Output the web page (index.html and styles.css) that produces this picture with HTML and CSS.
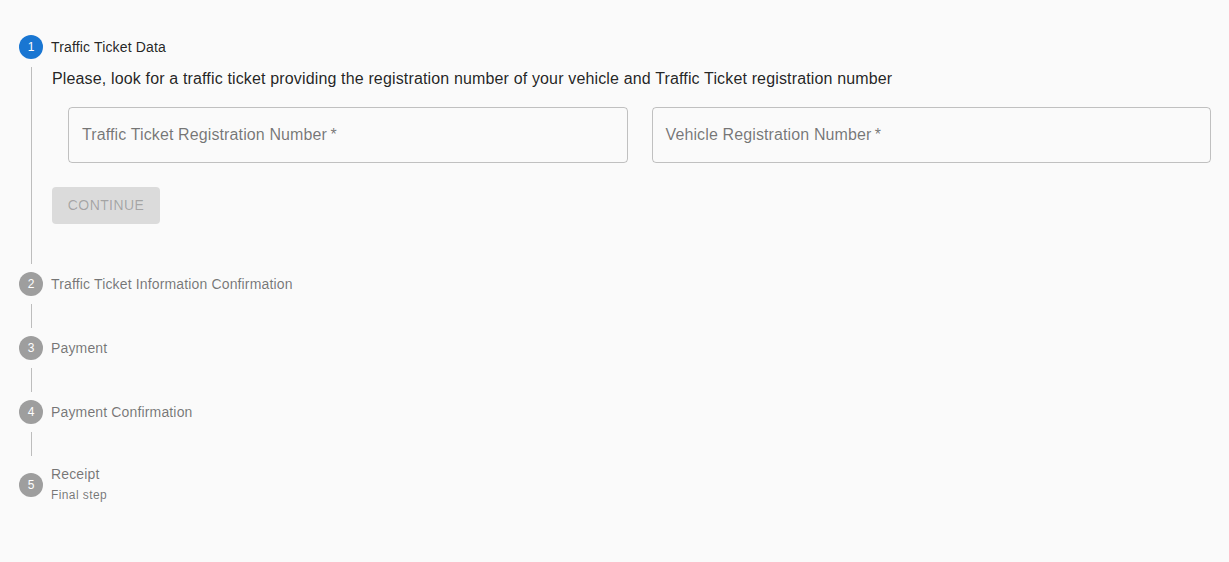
FILE: index.html
```html
<!DOCTYPE html>
<html lang="en">
<head>
<meta charset="utf-8">
<title>Traffic Ticket</title>
<link rel="stylesheet" href="styles.css">
</head>
<body>
<div class="stepper">
  <div class="step">
    <div class="step-label">
      <span class="step-icon active">1</span>
      <span class="label-text active">Traffic Ticket Data</span>
    </div>
    <div class="step-content">
      <p class="desc">Please, look for a traffic ticket providing the registration number of your vehicle and Traffic Ticket registration number</p>
      <div class="fields">
        <div class="field"><span class="field-label">Traffic Ticket Registration Number<span class="req">&thinsp;*</span></span></div>
        <div class="field"><span class="field-label">Vehicle Registration Number<span class="req">&thinsp;*</span></span></div>
      </div>
      <div class="actions">
        <button class="btn" disabled>Continue</button>
      </div>
    </div>
  </div>
  <div class="step">
    <div class="step-label">
      <span class="step-icon">2</span>
      <span class="label-text">Traffic Ticket Information Confirmation</span>
    </div>
  </div>
  <div class="connector"></div>
  <div class="step">
    <div class="step-label">
      <span class="step-icon">3</span>
      <span class="label-text">Payment</span>
    </div>
  </div>
  <div class="connector"></div>
  <div class="step">
    <div class="step-label">
      <span class="step-icon">4</span>
      <span class="label-text">Payment Confirmation</span>
    </div>
  </div>
  <div class="connector"></div>
  <div class="step">
    <div class="step-label">
      <span class="step-icon">5</span>
      <span class="label-stack">
        <span class="label-text">Receipt</span>
        <span class="optional">Final step</span>
      </span>
    </div>
  </div>
</div>
</body>
</html>
```

FILE: styles.css
```css
* { box-sizing: border-box; }
html, body {
  margin: 0;
  padding: 0;
  background: #fafafa;
  font-family: "Liberation Sans", Arial, Helvetica, sans-serif;
}
.stepper {
  display: flex;
  flex-direction: column;
  padding: 27px 10px 20px 19px;
}
.step-label {
  display: flex;
  align-items: center;
  padding: 8px 0;
}
.step-icon {
  flex: 0 0 24px;
  width: 24px;
  height: 24px;
  border-radius: 50%;
  background: #9e9e9e;
  color: #fff;
  font-size: 12px;
  display: flex;
  align-items: center;
  justify-content: center;
  margin-right: 8px;
}
.step-icon.active { background: #1976d2; }
.label-text {
  font-size: 14px;
  line-height: 20px;
  letter-spacing: 0.15px;
  color: rgba(0,0,0,0.54);
}
.label-text.active { color: rgba(0,0,0,0.87); }
.label-stack {
  display: flex;
  flex-direction: column;
}
.optional {
  font-size: 12px;
  line-height: 22px;
  letter-spacing: 0.4px;
  color: rgba(0,0,0,0.54);
}
.step-content {
  margin-left: 12px;
  padding: 0 8px 40px 20px;
  border-left: 1px solid #bdbdbd;
}
.desc {
  margin: 0;
  font-size: 16px;
  line-height: 24px;
  letter-spacing: 0.15px;
  color: rgba(0,0,0,0.87);
}
.fields {
  display: grid;
  grid-template-columns: 1fr 1fr;
  gap: 24px;
  margin: 16px 0 0 16px;
}
.field {
  height: 56px;
  border: 1px solid rgba(0,0,0,0.23);
  border-radius: 4px;
  display: flex;
  align-items: center;
  padding: 0 13px;
}
.field-label {
  font-size: 16px;
  letter-spacing: 0.12px;
  color: rgba(0,0,0,0.54);
}
.actions {
  margin-top: 24px;
}
.btn {
  width: 108px;
  height: 37px;
  padding: 0 0 1px;
  border: none;
  border-radius: 4px;
  background: rgba(0,0,0,0.12);
  color: rgba(0,0,0,0.26);
  font-family: inherit;
  font-size: 14px;
  font-weight: 500;
  letter-spacing: 0.4px;
  text-transform: uppercase;
}
.connector {
  margin-left: 12px;
  height: 24px;
  border-left: 1px solid #bdbdbd;
}
```
